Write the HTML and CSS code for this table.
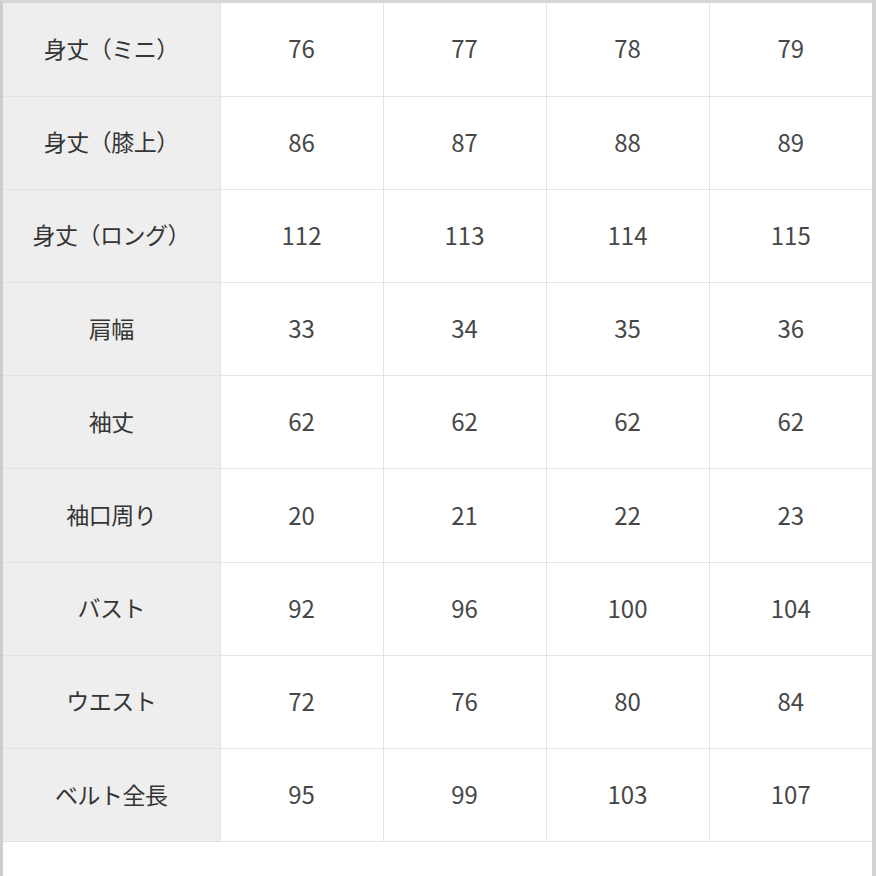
FILE: index.html
```html
<!DOCTYPE html>
<html lang="ja">
<head>
<meta charset="utf-8">
<link rel="stylesheet" href="styles.css">
</head>
<body>
<div class="frame">
<table class="sizes">
<colgroup><col class="c-label"><col class="c-val"><col class="c-val"><col class="c-val"><col class="c-val"></colgroup>
<tbody>
<tr><th>身丈（ミニ）</th><td>76</td><td>77</td><td>78</td><td>79</td></tr>
<tr><th>身丈（膝上）</th><td>86</td><td>87</td><td>88</td><td>89</td></tr>
<tr><th>身丈（ロング）</th><td>112</td><td>113</td><td>114</td><td>115</td></tr>
<tr><th>肩幅</th><td>33</td><td>34</td><td>35</td><td>36</td></tr>
<tr><th>袖丈</th><td>62</td><td>62</td><td>62</td><td>62</td></tr>
<tr><th>袖口周り</th><td>20</td><td>21</td><td>22</td><td>23</td></tr>
<tr><th>バスト</th><td>92</td><td>96</td><td>100</td><td>104</td></tr>
<tr><th>ウエスト</th><td>72</td><td>76</td><td>80</td><td>84</td></tr>
<tr><th>ベルト全長</th><td>95</td><td>99</td><td>103</td><td>107</td></tr>
</tbody>
</table>
</div>
</body>
</html>
```

FILE: styles.css
```css
html, body {
  margin: 0;
  padding: 0;
  background: #ffffff;
}
.frame {
  box-sizing: border-box;
  width: 876px;
  height: 876px;
  border-left: 3px solid #cdcdcd;
  border-top: 3px solid #d6d6d6;
  border-right: 4px solid #d2d2d2;
  background: #ffffff;
  overflow: hidden;
}
.sizes {
  border-collapse: collapse;
  table-layout: fixed;
  width: 869px;
  font-family: "Noto Sans CJK JP", "Noto Sans", sans-serif;
}
.c-label { width: 217px; }
.c-val { width: 163px; }
.sizes tr { height: 93.2px; }
.sizes th,
.sizes td {
  padding: 0 0 3px 0;
  text-align: center;
  vertical-align: middle;
  border: 1px solid #e3e3e3;
}
.sizes tr:first-child th,
.sizes tr:first-child td { border-top: none; }
.sizes th:first-child { border-left: none; }
.sizes td:last-child { border-right: none; }
.sizes th {
  background: #eeeeee;
  color: #353535;
  font-weight: normal;
  font-size: 23px;
  letter-spacing: -0.5px;
}
.sizes td {
  color: #474747;
  font-size: 24px;
}
```
